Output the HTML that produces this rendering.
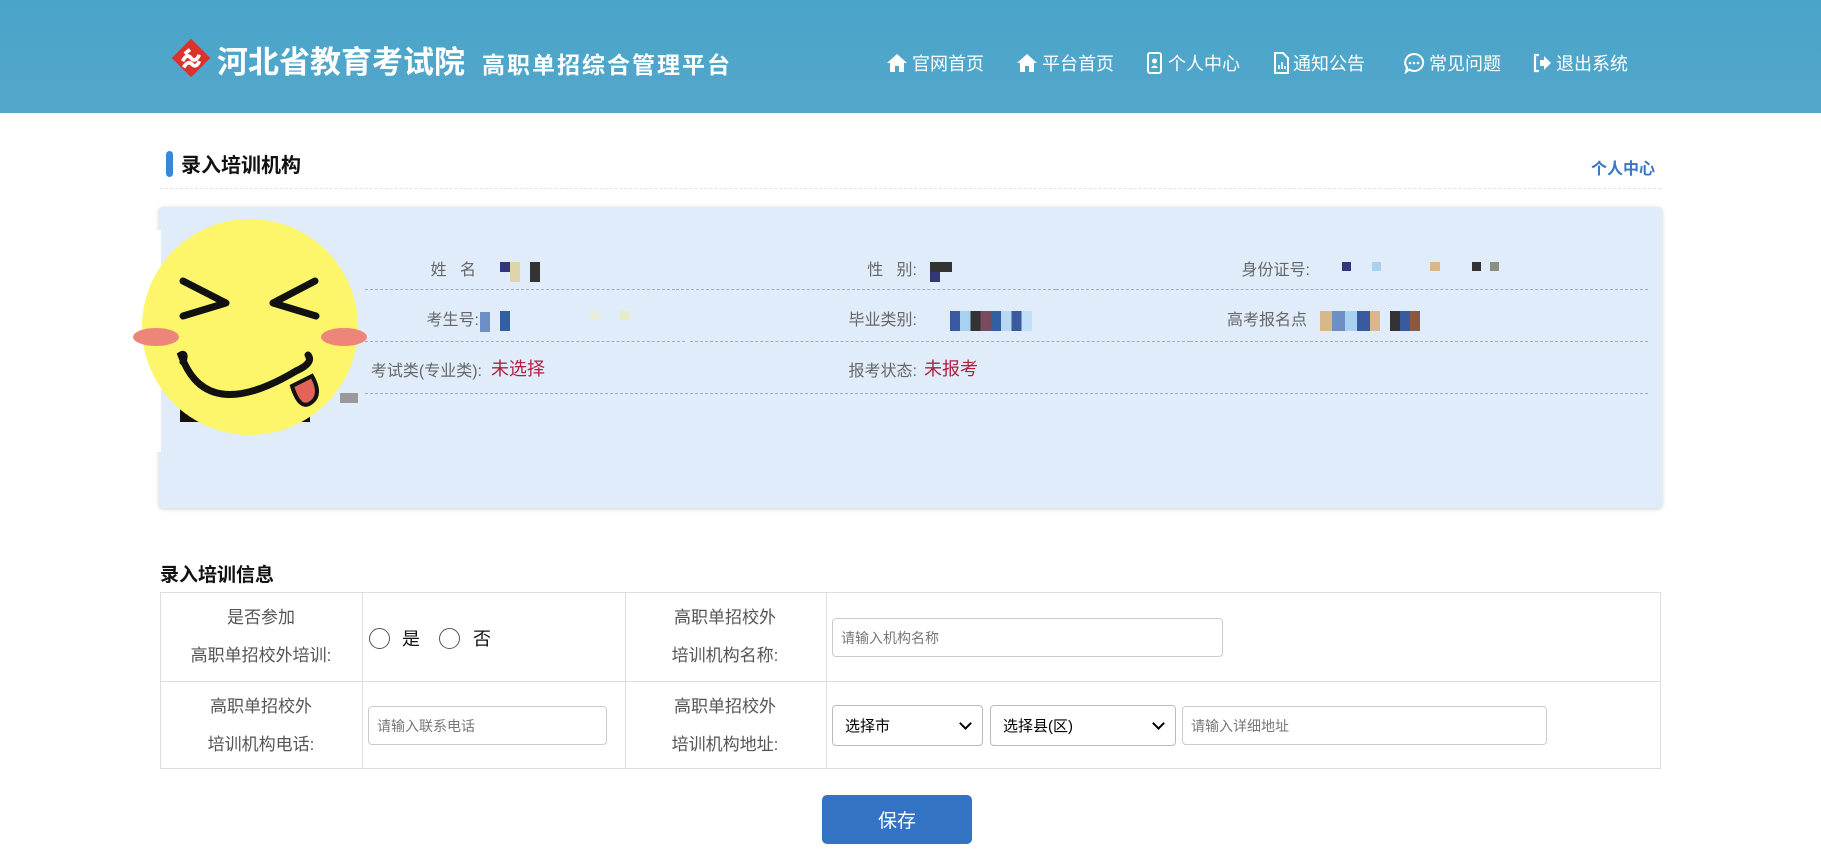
<!DOCTYPE html>
<html><head><meta charset="utf-8"><style>
*{margin:0;padding:0;box-sizing:border-box}
body{width:1821px;height:864px;overflow:hidden;background:#fff;font-family:"Liberation Sans","Noto Sans CJK SC",sans-serif;position:relative;color:#555}
.hd{position:absolute;left:0;top:0;width:1821px;height:113px;background:linear-gradient(#4aa3c9,#52a8cb)}
.abs{position:absolute;white-space:nowrap}
.nav{position:absolute;top:50px;color:#fff;font-size:18px;display:flex;align-items:center;gap:4px}
.dl{position:absolute;height:0;border-top:1px dashed #aab}
.lbl{position:absolute;font-size:16px;color:#666;text-align:right}
.px{position:absolute}
.tb{position:absolute;left:160px;top:592px;width:1501px;height:177px;border:1px solid #ddd}
.v{position:absolute;top:0;bottom:0;border-left:1px solid #ddd}
.tl{position:absolute;font-size:17px;color:#555;text-align:center;line-height:38px}
.in{position:absolute;border:1px solid #ccc;border-radius:4px;background:#fff;font-size:14px;color:#777;padding-left:8px;display:flex;align-items:center}
.sel{position:absolute;border:1px solid #bbb;border-radius:4px;background:#fff;font-size:15px;color:#000;padding-left:12px;display:flex;align-items:center}
.sel:after{content:"";position:absolute;right:12px;top:13px;width:7px;height:7px;border-right:2px solid #000;border-bottom:2px solid #000;transform:rotate(45deg)}
</style></head><body>
<div class="hd">
 <svg class="abs" style="left:170px;top:36px" width="42" height="44" viewBox="0 0 40 42"><rect x="7" y="8" width="26" height="26" transform="rotate(45 20 21)" fill="#d9342b"/><path d="M12 24 q4-8 8-3 M20 21 q4 5 8-3 M13 30 q4-7 8-3 q4 4 7-3 M14 17 l5-4" stroke="#fff" stroke-width="3.5" fill="none"/></svg>
 <div class="abs" style="left:217px;top:37px;font-size:31px;font-weight:bold;color:#fff">河北省教育考试院</div>
 <div class="abs" style="left:482px;top:46px;font-size:23px;font-weight:bold;color:#fff;letter-spacing:2px">高职单招综合管理平台</div>
 <div class="nav" style="left:886px"><svg width="22" height="20" viewBox="0 0 22 20"><path d="M11 1 L21 10 H18 V19 H13 V13 H9 V19 H4 V10 H1Z" fill="#fff"/></svg>官网首页</div>
 <div class="nav" style="left:1016px"><svg width="22" height="20" viewBox="0 0 22 20"><path d="M11 1 L21 10 H18 V19 H13 V13 H9 V19 H4 V10 H1Z" fill="#fff"/></svg>平台首页</div>
 <div class="nav" style="left:1146px"><svg width="18" height="22" viewBox="0 0 18 22"><rect x="2" y="1" width="13" height="20" rx="2" stroke="#fff" stroke-width="2" fill="none"/><circle cx="8.5" cy="9" r="2.5" fill="#fff"/><path d="M5 16 q3.5-5 7 0z" fill="#fff"/></svg>个人中心</div>
 <div class="nav" style="left:1273px"><svg width="16" height="22" viewBox="0 0 16 22"><path d="M2 1 H10 L15 6 V21 H2Z" stroke="#fff" stroke-width="2" fill="none"/><path d="M6 17 V13 M9 17 V10 M12 17 V14" stroke="#fff" stroke-width="1.6"/></svg>通知公告</div>
 <div class="nav" style="left:1403px"><svg width="22" height="22" viewBox="0 0 22 22"><path d="M11 2 a9 8.5 0 1 1 -5 15.5 L3 20 L4 15.5 A9 8.5 0 0 1 11 2Z" stroke="#fff" stroke-width="2" fill="none"/><circle cx="7" cy="11" r="1.3" fill="#fff"/><circle cx="11" cy="11" r="1.3" fill="#fff"/><circle cx="15" cy="11" r="1.3" fill="#fff"/></svg>常见问题</div>
 <div class="nav" style="left:1532px"><svg width="20" height="20" viewBox="0 0 20 20"><path d="M7 2 H3 V18 H7" stroke="#fff" stroke-width="2.2" fill="none"/><path d="M8 7 H12 V3 L19 10 L12 17 V13 H8Z" fill="#fff"/></svg>退出系统</div>
</div>

<div class="abs" style="left:166px;top:151px;width:7px;height:26px;background:#3a86d8;border-radius:4px"></div>
<div class="abs" style="left:181px;top:149px;font-size:20px;font-weight:bold;color:#111">录入培训机构</div>
<div class="abs" style="left:1591px;top:155px;font-size:16px;font-weight:bold;color:#3a76c4">个人中心</div>
<div class="dl" style="left:160px;top:188px;width:1501px;border-color:#e3e3e3"></div>

<div class="abs" style="left:159px;top:207px;width:1503px;height:301px;background:#e0ecf9;border-radius:4px;box-shadow:0 1px 4px rgba(0,0,0,.2)"></div>
<div class="abs" style="left:155px;top:230px;width:6px;height:222px;background:#fff"></div>

<div class="lbl" style="left:400px;top:256px;width:76px">姓&nbsp;&nbsp;&nbsp;名</div>
<div class="lbl" style="left:820px;top:256px;width:97px">性&nbsp;&nbsp;&nbsp;别:</div>
<div class="lbl" style="left:1200px;top:256px;width:110px">身份证号:</div>
<div class="lbl" style="left:400px;top:306px;width:79px">考生号:</div>
<div class="lbl" style="left:820px;top:306px;width:97px">毕业类别:</div>
<div class="lbl" style="left:1200px;top:306px;width:107px">高考报名点</div>
<div class="lbl" style="left:350px;top:357px;width:132px">考试类(专业类):</div>
<div class="abs" style="left:491px;top:355px;font-size:18px;color:#b0203f">未选择</div>
<div class="lbl" style="left:820px;top:357px;width:97px">报考状态:</div>
<div class="abs" style="left:924px;top:355px;font-size:18px;color:#b0203f">未报考</div>

<div class="dl" style="left:365px;top:289px;width:310px"></div>
<div class="dl" style="left:676px;top:289px;width:380px"></div>
<div class="dl" style="left:1056px;top:289px;width:592px"></div>
<div class="dl" style="left:365px;top:341px;width:320px"></div>
<div class="dl" style="left:690px;top:341px;width:500px"></div>
<div class="dl" style="left:1190px;top:341px;width:458px"></div>
<div class="dl" style="left:365px;top:393px;width:1283px"></div>

<div class="px" style="left:500px;top:262px;width:10px;height:10px;background:#35357a"></div>
<div class="px" style="left:510px;top:262px;width:10px;height:20px;background:#ddd4a8"></div>
<div class="px" style="left:530px;top:262px;width:10px;height:20px;background:#333"></div>
<div class="px" style="left:930px;top:262px;width:22px;height:10px;background:#333"></div>
<div class="px" style="left:930px;top:272px;width:10px;height:10px;background:#35357a"></div>
<div class="px" style="left:1342px;top:262px;width:9px;height:9px;background:#35357a"></div>
<div class="px" style="left:1372px;top:262px;width:9px;height:9px;background:#a8d0f0"></div>
<div class="px" style="left:1430px;top:262px;width:10px;height:9px;background:#d8b88a"></div>
<div class="px" style="left:1472px;top:262px;width:9px;height:9px;background:#333"></div>
<div class="px" style="left:1490px;top:262px;width:9px;height:9px;background:#8a9080"></div>
<div class="px" style="left:480px;top:312px;width:10px;height:20px;background:#6d8fc5"></div>
<div class="px" style="left:500px;top:311px;width:10px;height:20px;background:#3060a0"></div>
<div class="px" style="left:590px;top:311px;width:10px;height:9px;background:#e8eed8"></div>
<div class="px" style="left:620px;top:311px;width:10px;height:9px;background:#e5ecc8"></div>
<div class="px" style="left:950px;top:311px;width:82px;height:20px;background:linear-gradient(90deg,#3a5aa0 0 12%,#a8d0f0 12% 25%,#333 25% 37%,#7a4a60 37% 50%,#3060a0 50% 62%,#b8d8f0 62% 75%,#3a5aa0 75% 87%,#c0e0f8 87%)"></div>
<div class="px" style="left:1320px;top:311px;width:100px;height:20px;background:linear-gradient(90deg,#d8b88a 0 12%,#6d8fc5 12% 25%,#a8d0f0 25% 37%,#3a5aa0 37% 50%,#d8b88a 50% 60%,#e0ecf9 60% 70%,#333 70% 80%,#3a5aa0 80% 90%,#8a5a40 90%)"></div>
<div class="px" style="left:180px;top:398px;width:130px;height:24px;background:#111"></div>
<div class="px" style="left:340px;top:393px;width:18px;height:10px;background:#999"></div>

<svg class="abs" style="left:130px;top:218px" width="240" height="220" viewBox="130 218 240 220">
 <circle cx="250" cy="327" r="108" fill="#fdf56a"/>
 <ellipse cx="156" cy="337" rx="23" ry="9" fill="#ee857a"/>
 <ellipse cx="344" cy="337" rx="23" ry="9" fill="#ee857a"/>
 <path d="M183 281 L226 303 L183 316 M315 281 L273 303 L316 316" stroke="#111" stroke-width="7" fill="none" stroke-linecap="round" stroke-linejoin="round"/>
 <path d="M292 386 q8 26 20 16 q10-8 0-26z" fill="#e46358" stroke="#111" stroke-width="4"/>
 <path d="M183 362 q3-10 -2-7 q25 70 115 16 q18-8 12-16" stroke="#111" stroke-width="7" fill="none" stroke-linecap="round"/>
</svg>

<div class="abs" style="left:160px;top:560px;font-size:19px;font-weight:bold;color:#111">录入培训信息</div>
<div class="tb">
 <div style="position:absolute;left:0;right:0;top:88px;border-top:1px solid #ddd"></div>
 <div class="v" style="left:201px"></div><div class="v" style="left:464px"></div><div class="v" style="left:665px"></div>
</div>
<div class="tl" style="left:161px;top:599px;width:200px">是否参加<br>高职单招校外培训:</div>
<div class="tl" style="left:625px;top:599px;width:200px">高职单招校外<br>培训机构名称:</div>
<div class="tl" style="left:161px;top:688px;width:200px">高职单招校外<br>培训机构电话:</div>
<div class="tl" style="left:625px;top:688px;width:200px">高职单招校外<br>培训机构地址:</div>
<div class="abs" style="left:369px;top:628px;width:21px;height:21px;border:1px solid #555;border-radius:50%"></div>
<div class="abs" style="left:402px;top:625px;font-size:18px;color:#111">是</div>
<div class="abs" style="left:439px;top:628px;width:21px;height:21px;border:1px solid #555;border-radius:50%"></div>
<div class="abs" style="left:473px;top:625px;font-size:18px;color:#111">否</div>
<div class="in" style="left:832px;top:618px;width:391px;height:39px">请输入机构名称</div>
<div class="in" style="left:368px;top:706px;width:239px;height:39px">请输入联系电话</div>
<div class="sel" style="left:832px;top:705px;width:151px;height:41px">选择市</div>
<div class="sel" style="left:990px;top:705px;width:186px;height:41px">选择县(区)</div>
<div class="in" style="left:1182px;top:706px;width:365px;height:39px">请输入详细地址</div>
<div class="abs" style="left:822px;top:795px;width:150px;height:49px;background:#3373c4;border-radius:5px;color:#fff;font-size:19px;display:flex;align-items:center;justify-content:center">保存</div>
</body></html>
